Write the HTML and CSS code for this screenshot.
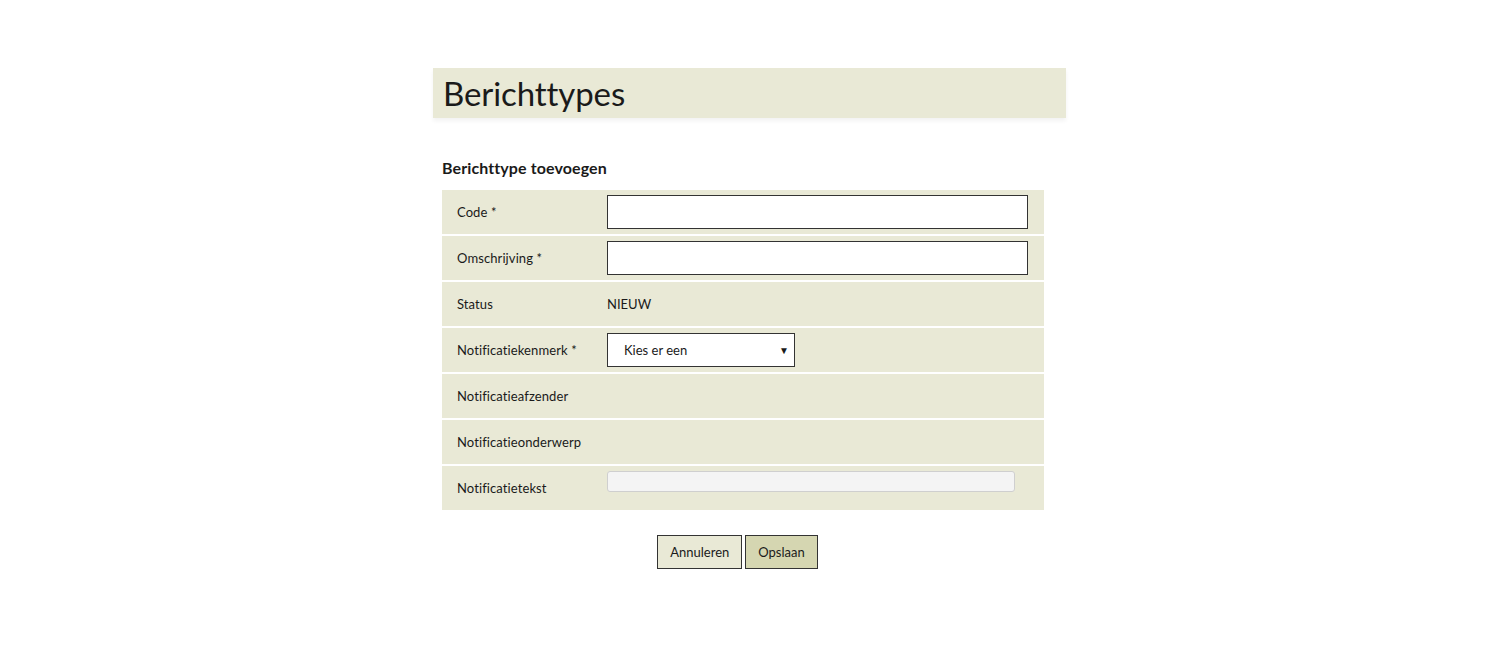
FILE: index.html
```html
<!DOCTYPE html>
<html lang="nl">
<head>
<meta charset="utf-8">
<title>Berichttypes</title>
<link rel="stylesheet" href="styles.css">
</head>
<body>
<div class="page">
  <header class="titlebar"><h1>Berichttypes</h1></header>
  <section class="content">
    <h2>Berichttype toevoegen</h2>
    <div class="form">
      <div class="row"><label>Code *</label><input class="text" type="text"></div>
      <div class="row"><label>Omschrijving *</label><input class="text" type="text"></div>
      <div class="row"><label>Status</label><span class="value">NIEUW</span></div>
      <div class="row"><label>Notificatiekenmerk *</label>
        <div class="select"><span>Kies er een</span><span class="arrow">&#9660;</span></div>
      </div>
      <div class="row"><label>Notificatieafzender</label></div>
      <div class="row"><label>Notificatieonderwerp</label></div>
      <div class="row"><label>Notificatietekst</label><div class="textarea"></div></div>
    </div>
    <div class="buttons">
      <button class="btn">Annuleren</button>
      <button class="btn btn-primary">Opslaan</button>
    </div>
  </section>
</div>
</body>
</html>
```

FILE: styles.css
```css
* { box-sizing: border-box; }
body {
  margin: 0;
  background: #fff;
  font-family: Lato, "Noto Sans", sans-serif;
  color: #1a1a1a;
}
.page {
  width: 633px;
  margin: 68px 0 0 433px;
}
.titlebar {
  background: #e9e9d6;
  height: 50px;
  padding-left: 10px;
  display: flex;
  align-items: center;
  box-shadow: 0 3px 4px rgba(0,0,0,0.05);
}
.titlebar h1 {
  margin: 0;
  font-weight: 400;
  font-size: 33px;
  letter-spacing: -0.1px;
}
.content {
  padding: 0 22px 0 9px;
}
.content h2 {
  margin: 39px 0 0;
  height: 33px;
  font-size: 16px;
  font-weight: 700;
  line-height: 22px;
  letter-spacing: 0.1px;
}
.form {
  display: flex;
  flex-direction: column;
  gap: 2px;
}
.row {
  background: #e9e9d6;
  height: 44px;
  padding-left: 15px;
  padding-bottom: 1px;
  display: grid;
  grid-template-columns: 150px 1fr;
  align-items: center;
  font-size: 13px;
}
.row label { letter-spacing: 0.1px; }
.value { font-size: 13px; }
.text {
  width: 421px;
  height: 34px;
  border: 1px solid #333;
  background: #fff;
  margin: 0;
}
.select {
  width: 188px;
  height: 34px;
  border: 1px solid #333;
  background: #fff;
  display: flex;
  align-items: center;
  justify-content: space-between;
  padding: 0 5px 0 16px;
  font-size: 13px;
}
.select .arrow { font-size: 10px; }
.textarea {
  align-self: start;
  margin-top: 5px;
  width: 408px;
  height: 21px;
  border: 1px solid #cfcfcf;
  border-radius: 3px;
  background: #f4f4f4;
}
.buttons {
  display: flex;
  justify-content: center;
  gap: 3px;
  margin-top: 25px;
  padding-right: 11px;
}
.btn {
  font-family: Lato, "Noto Sans", sans-serif;
  font-size: 13px;
  color: #1a1a1a;
  height: 34px;
  border: 1px solid #333;
  background: #e9e9d6;
  padding: 0 12px;
}
.btn-primary { background: #d5d6b1; }
```
